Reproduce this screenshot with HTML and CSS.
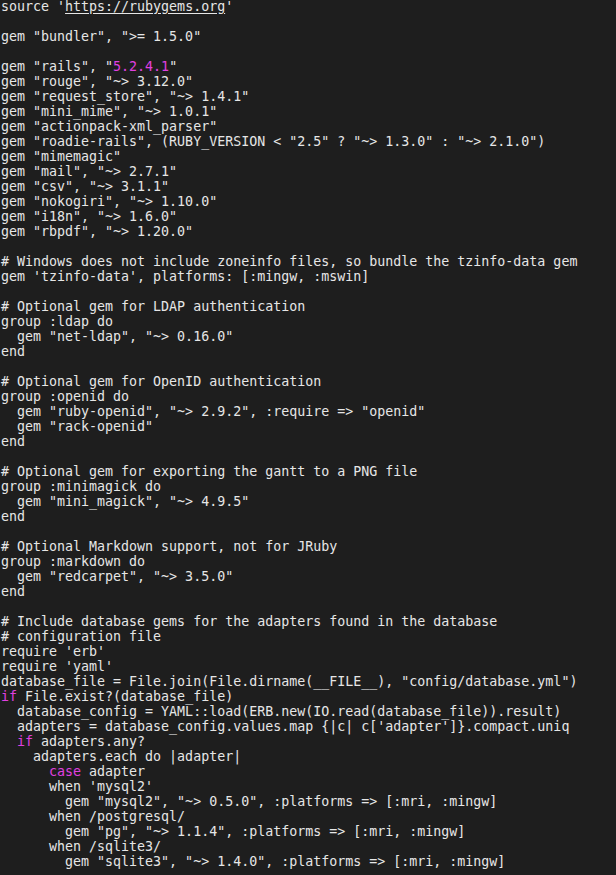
FILE: index.html
```html
<!DOCTYPE html>
<html>
<head>
<meta charset="utf-8">
<link rel="stylesheet" href="styles.css">
</head>
<body>
<pre class="code">source '<span class="link">https://rubygems.org</span>'

gem "bundler", "&gt;= 1.5.0"

gem "rails", "<span class="kw">5.2.4.1</span>"
gem "rouge", "~&gt; 3.12.0"
gem "request_store", "~&gt; 1.4.1"
gem "mini_mime", "~&gt; 1.0.1"
gem "actionpack-xml_parser"
gem "roadie-rails", (RUBY_VERSION &lt; "2.5" ? "~&gt; 1.3.0" : "~&gt; 2.1.0")
gem "mimemagic"
gem "mail", "~&gt; 2.7.1"
gem "csv", "~&gt; 3.1.1"
gem "nokogiri", "~&gt; 1.10.0"
gem "i18n", "~&gt; 1.6.0"
gem "rbpdf", "~&gt; 1.20.0"

# Windows does not include zoneinfo files, so bundle the tzinfo-data gem
gem 'tzinfo-data', platforms: [:mingw, :mswin]

# Optional gem for LDAP authentication
group :ldap do
  gem "net-ldap", "~&gt; 0.16.0"
end

# Optional gem for OpenID authentication
group :openid do
  gem "ruby-openid", "~&gt; 2.9.2", :require =&gt; "openid"
  gem "rack-openid"
end

# Optional gem for exporting the gantt to a PNG file
group :minimagick do
  gem "mini_magick", "~&gt; 4.9.5"
end

# Optional Markdown support, not for JRuby
group :markdown do
  gem "redcarpet", "~&gt; 3.5.0"
end

# Include database gems for the adapters found in the database
# configuration file
require 'erb'
require 'yaml'
database_file = File.join(File.dirname(__FILE__), "config/database.yml")
<span class="kw">if</span> File.exist?(database_file)
  database_config = YAML::load(ERB.new(IO.read(database_file)).result)
  adapters = database_config.values.map {|c| c['adapter']}.compact.uniq
  <span class="kw">if</span> adapters.any?
    adapters.each do |adapter|
      <span class="kw">case</span> adapter
      when 'mysql2'
        gem "mysql2", "~&gt; 0.5.0", :platforms =&gt; [:mri, :mingw]
      when /postgresql/
        gem "pg", "~&gt; 1.1.4", :platforms =&gt; [:mri, :mingw]
      when /sqlite3/
        gem "sqlite3", "~&gt; 1.4.0", :platforms =&gt; [:mri, :mingw]
</pre>
</body>
</html>
```
FILE: styles.css
```css
html, body {
  margin: 0;
  padding: 0;
  background: #1e1e1e;
  height: 100%;
  overflow: hidden;
}

.code {
  margin: -1px 0 0 0;
  padding: 0 0 0 1px;
  font-family: "DejaVu Sans Mono", monospace;
  font-size: 13.3px;
  line-height: 15px;
  color: #e6e6e6;
  white-space: pre;
}

.link {
  text-decoration: underline;
  text-underline-offset: 2px;
}

.kw {
  color: #e040e0;
}
```
